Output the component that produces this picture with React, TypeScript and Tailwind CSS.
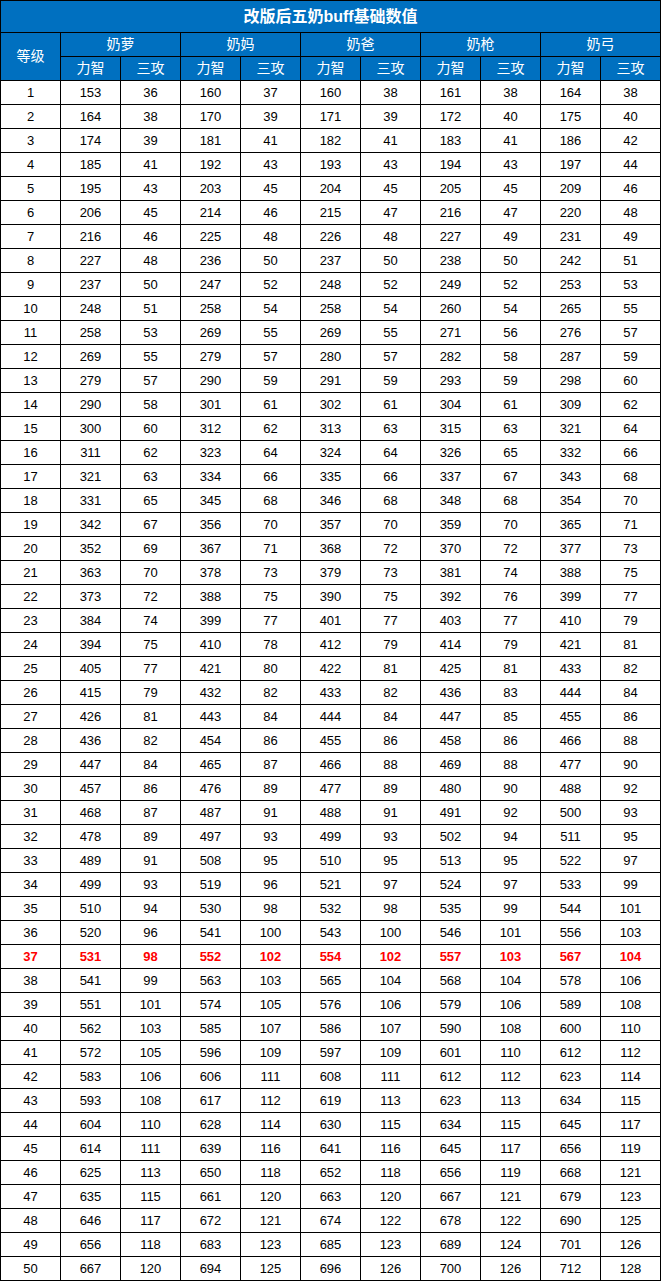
import React from "react";

const data: number[][] = [
  [153, 36, 160, 37, 160, 38, 161, 38, 164, 38],
  [164, 38, 170, 39, 171, 39, 172, 40, 175, 40],
  [174, 39, 181, 41, 182, 41, 183, 41, 186, 42],
  [185, 41, 192, 43, 193, 43, 194, 43, 197, 44],
  [195, 43, 203, 45, 204, 45, 205, 45, 209, 46],
  [206, 45, 214, 46, 215, 47, 216, 47, 220, 48],
  [216, 46, 225, 48, 226, 48, 227, 49, 231, 49],
  [227, 48, 236, 50, 237, 50, 238, 50, 242, 51],
  [237, 50, 247, 52, 248, 52, 249, 52, 253, 53],
  [248, 51, 258, 54, 258, 54, 260, 54, 265, 55],
  [258, 53, 269, 55, 269, 55, 271, 56, 276, 57],
  [269, 55, 279, 57, 280, 57, 282, 58, 287, 59],
  [279, 57, 290, 59, 291, 59, 293, 59, 298, 60],
  [290, 58, 301, 61, 302, 61, 304, 61, 309, 62],
  [300, 60, 312, 62, 313, 63, 315, 63, 321, 64],
  [311, 62, 323, 64, 324, 64, 326, 65, 332, 66],
  [321, 63, 334, 66, 335, 66, 337, 67, 343, 68],
  [331, 65, 345, 68, 346, 68, 348, 68, 354, 70],
  [342, 67, 356, 70, 357, 70, 359, 70, 365, 71],
  [352, 69, 367, 71, 368, 72, 370, 72, 377, 73],
  [363, 70, 378, 73, 379, 73, 381, 74, 388, 75],
  [373, 72, 388, 75, 390, 75, 392, 76, 399, 77],
  [384, 74, 399, 77, 401, 77, 403, 77, 410, 79],
  [394, 75, 410, 78, 412, 79, 414, 79, 421, 81],
  [405, 77, 421, 80, 422, 81, 425, 81, 433, 82],
  [415, 79, 432, 82, 433, 82, 436, 83, 444, 84],
  [426, 81, 443, 84, 444, 84, 447, 85, 455, 86],
  [436, 82, 454, 86, 455, 86, 458, 86, 466, 88],
  [447, 84, 465, 87, 466, 88, 469, 88, 477, 90],
  [457, 86, 476, 89, 477, 89, 480, 90, 488, 92],
  [468, 87, 487, 91, 488, 91, 491, 92, 500, 93],
  [478, 89, 497, 93, 499, 93, 502, 94, 511, 95],
  [489, 91, 508, 95, 510, 95, 513, 95, 522, 97],
  [499, 93, 519, 96, 521, 97, 524, 97, 533, 99],
  [510, 94, 530, 98, 532, 98, 535, 99, 544, 101],
  [520, 96, 541, 100, 543, 100, 546, 101, 556, 103],
  [531, 98, 552, 102, 554, 102, 557, 103, 567, 104],
  [541, 99, 563, 103, 565, 104, 568, 104, 578, 106],
  [551, 101, 574, 105, 576, 106, 579, 106, 589, 108],
  [562, 103, 585, 107, 586, 107, 590, 108, 600, 110],
  [572, 105, 596, 109, 597, 109, 601, 110, 612, 112],
  [583, 106, 606, 111, 608, 111, 612, 112, 623, 114],
  [593, 108, 617, 112, 619, 113, 623, 113, 634, 115],
  [604, 110, 628, 114, 630, 115, 634, 115, 645, 117],
  [614, 111, 639, 116, 641, 116, 645, 117, 656, 119],
  [625, 113, 650, 118, 652, 118, 656, 119, 668, 121],
  [635, 115, 661, 120, 663, 120, 667, 121, 679, 123],
  [646, 117, 672, 121, 674, 122, 678, 122, 690, 125],
  [656, 118, 683, 123, 685, 123, 689, 124, 701, 126],
  [667, 120, 694, 125, 696, 126, 700, 126, 712, 128],
];

const names = ["奶萝", "奶妈", "奶爸", "奶枪", "奶弓"];

export default function App() {
  return (
    <div
      className="w-[661px] bg-white"
      style={{ fontFamily: '"Liberation Sans", Arial, "Noto Sans CJK SC", sans-serif' }}
    >
      <div className="grid grid-cols-[repeat(11,59px)] grid-rows-[31px_23px_23px_repeat(50,23px)] gap-px bg-black p-px">
        <div className="col-span-11 bg-[#0070c0] text-white font-bold text-[16px] flex items-center justify-center">
          改版后五奶buff基础数值
        </div>
        <div className="row-span-2 bg-[#0070c0] text-white text-[14px] flex items-center justify-center">
          等级
        </div>
        {names.map((n) => (
          <div
            key={n}
            className="col-span-2 bg-[#0070c0] text-white text-[14px] flex items-center justify-center"
          >
            {n}
          </div>
        ))}
        {names.map((n) => (
          <React.Fragment key={n + "s"}>
            <div className="bg-[#0070c0] text-white text-[14px] flex items-center justify-center">
              力智
            </div>
            <div className="bg-[#0070c0] text-white text-[14px] flex items-center justify-center">
              三攻
            </div>
          </React.Fragment>
        ))}
        {data.map((row, i) => {
          const hl = i === 36;
          const cls = hl
            ? "bg-white text-[#ff0000] font-bold text-[13px] flex items-center justify-center"
            : "bg-white text-black text-[13px] flex items-center justify-center";
          return (
            <React.Fragment key={i}>
              <div className={cls}>{i + 1}</div>
              {row.map((v, j) => (
                <div key={j} className={cls}>
                  {v}
                </div>
              ))}
            </React.Fragment>
          );
        })}
      </div>
    </div>
  );
}
